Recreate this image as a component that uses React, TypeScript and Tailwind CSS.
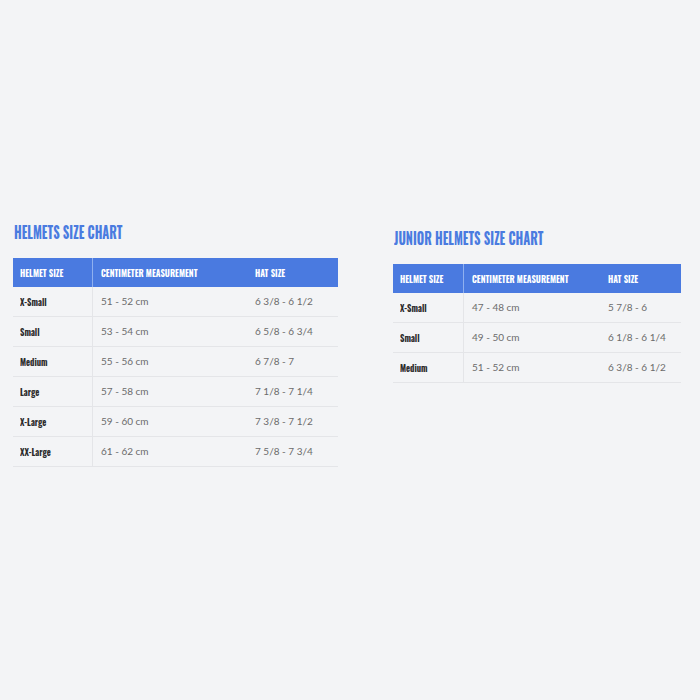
import React from 'react';

type Row = [string, string, string];

const adult: Row[] = [
  ['X-Small', '51 - 52 cm', '6 3/8 - 6 1/2'],
  ['Small', '53 - 54 cm', '6 5/8 - 6 3/4'],
  ['Medium', '55 - 56 cm', '6 7/8 - 7'],
  ['Large', '57 - 58 cm', '7 1/8 - 7 1/4'],
  ['X-Large', '59 - 60 cm', '7 3/8 - 7 1/2'],
  ['XX-Large', '61 - 62 cm', '7 5/8 - 7 3/4'],
];

const junior: Row[] = [
  ['X-Small', '47 - 48 cm', '5 7/8 - 6'],
  ['Small', '49 - 50 cm', '6 1/8 - 6 1/4'],
  ['Medium', '51 - 52 cm', '6 3/8 - 6 1/2'],
];

const condensed = "font-['Oswald','Liberation_Sans_Narrow','DejaVu_Sans_Condensed',sans-serif]";

// narrow the condensed fallback a little more, Oswald-like
const Narrow = ({ children }: { children: React.ReactNode }) => (
  <span className="inline-block whitespace-nowrap origin-left scale-x-[0.86]">{children}</span>
);

const SizeChart = ({ title, rows, cols }: { title: string; rows: Row[]; cols: string }) => (
  <div>
    <h2 className={`${condensed} font-bold text-[16px] leading-5 text-[#4a7be0] pl-px whitespace-nowrap`}>
      <span className="inline-block origin-left scale-x-[0.79]">{title}</span>
    </h2>
    <div className="mt-[16px]">
      <div className={`grid ${cols} h-[29px] bg-[#4a7ae0] text-white ${condensed} font-bold text-[10px]`}>
        <div className="flex items-center pl-[7px] border-r border-[#8fb0ef]">
          <Narrow>HELMET SIZE</Narrow>
        </div>
        <div className="flex items-center pl-[8px]">
          <Narrow>CENTIMETER MEASUREMENT</Narrow>
        </div>
        <div className="flex items-center pl-[8px]">
          <Narrow>HAT SIZE</Narrow>
        </div>
      </div>
      {rows.map(([size, cm, hat]) => (
        <div key={size} className={`grid ${cols} h-[30px] border-b border-[#e4e5e8]`}>
          <div className={`flex items-center pl-[7px] border-r border-[#e4e5e8] ${condensed} font-bold text-[10px] text-[#2b2b2b]`}>
            <Narrow>{size}</Narrow>
          </div>
          <div className="flex items-center pl-[8px] font-['Lato',sans-serif] text-[10px] text-[#6b6b6b]">{cm}</div>
          <div className="flex items-center pl-[8px] font-['Lato',sans-serif] text-[10px] text-[#6b6b6b]">{hat}</div>
        </div>
      ))}
    </div>
  </div>
);

export default function App() {
  return (
    <div className="w-[700px] h-[700px] bg-[#f3f4f6] flex items-start">
      <div className="ml-[13px] mt-[222px] w-[325px]">
        <SizeChart title="HELMETS SIZE CHART" rows={adult} cols="grid-cols-[80px_154px_91px]" />
      </div>
      <div className="ml-[55px] mt-[228px] w-[288px]">
        <SizeChart title="JUNIOR HELMETS SIZE CHART" rows={junior} cols="grid-cols-[71px_136px_81px]" />
      </div>
    </div>
  );
}
